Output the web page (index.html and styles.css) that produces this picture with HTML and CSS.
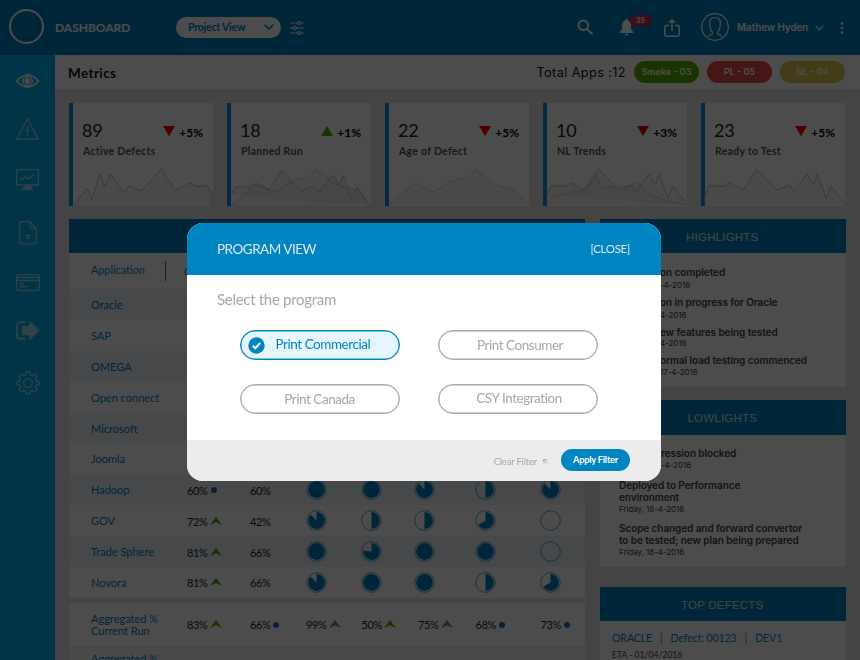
FILE: index.html
```
<!DOCTYPE html>
<html lang="en">
<head>
<meta charset="utf-8">
<title>Dashboard</title>
<link rel="stylesheet" href="styles.css">
</head>
<body>
<svg class="defs" width="0" height="0">
  <defs>
    <symbol id="p100" viewBox="0 0 21 21"><circle class="ring" cx="10.5" cy="10.5" r="9.8"/><circle class="fill" cx="10.5" cy="10.5" r="8.4"/></symbol>
    <symbol id="p88" viewBox="0 0 21 21"><circle class="ring" cx="10.5" cy="10.5" r="9.8"/><path class="fill" d="M10.5 10.5V2.1A8.4 8.4 0 1 1 4.6 4.6Z"/></symbol>
    <symbol id="p75" viewBox="0 0 21 21"><circle class="ring" cx="10.5" cy="10.5" r="9.8"/><path class="fill" d="M10.5 10.5V2.1A8.4 8.4 0 1 1 2.2 9.6Z"/></symbol>
    <symbol id="p66" viewBox="0 0 21 21"><circle class="ring" cx="10.5" cy="10.5" r="9.8"/><path class="fill" d="M10.5 10.5V2.1A8.4 8.4 0 1 1 3.2 14.7Z"/></symbol>
    <symbol id="p50" viewBox="0 0 21 21"><circle class="ring" cx="10.5" cy="10.5" r="9.8"/><path class="fill" d="M10.5 2.1A8.4 8.4 0 0 1 10.5 18.9Z"/></symbol>
    <symbol id="p0" viewBox="0 0 21 21"><circle class="ring" cx="10.5" cy="10.5" r="9.8"/></symbol>
    <symbol id="up" viewBox="0 0 12 8"><path d="M6 0L12 8L6 5.200L0 8Z" fill="#4fae00"/></symbol>
  </defs>
</svg>

<header class="topbar">
  <span class="logo"></span>
  <span class="brand">DASHBOARD</span>
  <span class="view">Project View
    <svg width="10" height="6" viewBox="0 0 10 6"><path d="M.7.7L5 5L9.3.7"/></svg>
  </span>
  <svg class="sliders" width="14" height="14" viewBox="0 0 14 14"><path d="M0 2H14M0 7H14M0 12H14"/><circle cx="9" cy="2" r="1.5"/><circle cx="5" cy="7" r="1.5"/><circle cx="9" cy="12" r="1.5"/></svg>
  <svg class="search" width="17" height="17" viewBox="0 0 17 17"><circle cx="6.3" cy="6.3" r="4.8"/><path d="M10 10L15.5 15.3"/></svg>
  <span class="bellwrap">
    <svg width="15" height="17" viewBox="0 0 15 17"><path d="M7.5 0C8.5 0 9 .7 9 1.6C11 2.3 12 4 12 6.4V10L14.6 13.4V14H.4V13.4L3 10V6.4C3 4 4 2.3 6 1.6C6 .7 6.5 0 7.5 0ZM5.8 14.8H9.2A1.7 1.7 0 0 1 5.8 14.8Z"/></svg>
    <span class="badge">35</span>
  </span>
  <svg class="share" width="16" height="18" viewBox="0 0 16 18"><path d="M5 6.5H2.5A1.7 1.7 0 0 0 .8 8.2V15.5A1.7 1.7 0 0 0 2.5 17.2H13.5A1.7 1.7 0 0 0 15.2 15.5V8.2A1.7 1.7 0 0 0 13.5 6.5H11M8 12V1M5 3.8L8 1L11 3.8"/></svg>
  <svg class="avatar" width="28" height="28" viewBox="0 0 28 28"><circle cx="14" cy="14" r="13.3"/><path d="M7 24C7.500 21.500 11.500 22.500 11.500 20C11.500 18 8.500 17 9 13C7.500 6.500 10 4.500 14 4.500S20.500 6.500 19 13C19.500 17 16.500 18 16.500 20C16.500 22.500 20.500 21.500 21 24"/></svg>
  <span class="user">Mathew Hyden</span>
  <svg class="chev" width="9" height="6" viewBox="0 0 9 6"><path d="M.6.7L4.500 4.900L8.400.7"/></svg>
  <svg class="dots" width="4" height="12" viewBox="0 0 4 12"><circle cx="2" cy="1.500" r="1.300"/><circle cx="2" cy="6" r="1.300"/><circle cx="2" cy="10.500" r="1.300"/></svg>
</header>

<div class="body">
  <nav class="side">
    <svg class="on" width="23" height="14" viewBox="0 0 23 14"><path d="M.7 7Q11.500-5.500 22.300 7Q11.500 19.500 .7 7Z"/><circle cx="11.500" cy="7" r="4.700"/><circle cx="11.500" cy="7" r="2.200" fill="#fff"/></svg>
    <svg width="23" height="22" viewBox="0 0 23 22"><path d="M11.500 1L22.300 21H.7Z"/><path d="M11.500 8.500V14.500M11.500 16.300V18.300" stroke-width="1.900"/></svg>
    <svg width="23" height="21" viewBox="0 0 23 21"><path d="M.6.6H22.400V16H.6ZM4.500 11.500L9.500 7.500L12.500 10L18.500 5.500"/><path class="solid" d="M9 17.500L7 20H16L14 17.500Z"/></svg>
    <svg width="18" height="24" viewBox="0 0 18 24"><path d="M11 .7H3.500A2.800 2.800 0 0 0 .7 3.500V20A2.800 2.800 0 0 0 3.500 22.800H14.500A2.800 2.800 0 0 0 17.300 20V7.500ZM11 .7V5A2.500 2.500 0 0 0 13.500 7.500H17.300M6.800 13.500L11.200 18M11.200 13.500L6.800 18"/></svg>
    <svg width="24" height="17" viewBox="0 0 24 17"><rect x=".6" y=".6" width="22.800" height="15.800" rx="1.500"/><path d="M1 3.500H23M1 6.500H23M3.500 10H8M3.500 12.700H12"/></svg>
    <svg width="23" height="19" viewBox="0 0 23 19"><path d="M9.500 1.200H4A2.800 2.800 0 0 0 1.200 4V15A2.800 2.800 0 0 0 4 17.800H9.500" stroke-width="2"/><path class="solid" d="M6.500 5.500H14V1L22.500 9.500L14 18V13.500H6.500Z"/></svg>
    <svg width="24" height="24" viewBox="0 0 24 24"><circle cx="12" cy="12" r="4.300"/><path d="M9.800 3.600Q9.800 .8 12 .8T14.200 3.600Q15 4.600 16.400 4.500Q18.800 2.400 20.100 3.900T19.500 7.600Q19.300 9 20.400 9.800Q23.200 9.800 23.200 12T20.400 14.200Q19.300 15 19.500 16.400Q21.600 18.800 20.100 20.100T16.400 19.500Q15 19.300 14.200 20.400Q14.200 23.200 12 23.200T9.800 20.400Q9 19.300 7.600 19.500Q5.200 21.600 3.900 20.100T4.500 16.400Q4.700 15 3.600 14.200Q.8 14.200 .8 12T3.600 9.800Q4.700 9 4.500 7.600Q2.400 5.200 3.900 3.900T7.600 4.500Q9 4.700 9.800 3.600Z"/></svg>
  </nav>

  <main>
    <div class="titlebar">
      <h1>Metrics</h1>
      <span class="total">Total Apps :12</span>
      <span class="tag green">Smoke - 03</span>
      <span class="tag red">PL - 05</span>
      <span class="tag yellow">NL - 04</span>
    </div>

    <section class="cards">
      <div class="card"><div class="figures"><b>89</b><i class="down"></i><em>+5%</em></div><p>Active Defects</p>
        <svg width="140" height="38" viewBox="0 0 141 38"><path class="dark" d="M1 38L14 20L19 32L27 6L32 18L38 6L51 25L56 18L69 23L89 1L103 22L118 15L123 18H136L140 26V38"/></svg></div>
      <div class="card"><div class="figures"><b>18</b><i class="up"></i><em>+1%</em></div><p>Planned Run</p>
        <svg width="140" height="38" viewBox="0 0 141 38"><path class="pale" d="M0 38L26 15L45 24L61 13L80 9L86 1L105 16L127 22L140 37"/><path class="dark" d="M0 27L4 19H17L24 16L38 22L51 2L70 23L84 18L89 24L103 7L109 18L113 7L121 31L127 19L140 38"/></svg></div>
      <div class="card"><div class="figures"><b>22</b><i class="down"></i><em>+5%</em></div><p>Age of Defect</p>
        <svg width="140" height="38" viewBox="0 0 141 38"><path class="pale" d="M0 37L26 15L45 24L62 13L82 9L87 1L105 16L125 22L141 37"/></svg></div>
      <div class="card"><div class="figures"><b>10</b><i class="down"></i><em>+3%</em></div><p>NL Trends</p>
        <svg width="140" height="38" viewBox="0 0 141 38"><path class="pale" d="M0 37L4 29L20 25L38 22L50 8L55 20L83 18L91 14L104 27L121 33L140 37"/><path class="dark" d="M0 27L4 18H19L24 15L38 22L52 1L72 22L85 17L89 23L103 6L109 17L113 6L122 30L127 18L141 37"/></svg></div>
      <div class="card"><div class="figures"><b>23</b><i class="down"></i><em>+5%</em></div><p>Ready to Test</p>
        <svg width="140" height="38" viewBox="0 0 141 38"><path class="dark" d="M0 37V27L4 18H20L24 15L39 22L52 1L72 22L85 17L90 23L103 6L109 17L113 6L122 30L127 18L141 37"/></svg></div>
    </section>

    <div class="columns">
      <section class="table">
        <div class="bar"></div>
        <div class="row head"><span class="name">Application</span><span class="col">C</span></div>
        <div class="row"><span class="name">Oracle</span></div>
        <div class="row"><span class="name">SAP</span></div>
        <div class="row"><span class="name">OMEGA</span></div>
        <div class="row"><span class="name">Open connect</span></div>
        <div class="row"><span class="name">Microsoft</span></div>
        <div class="row"><span class="name">Joomla</span></div>
        <div class="row"><span class="name">Hadoop</span><span>60%<i class="dot"></i></span><span>60%</span><svg><use href="#p100"/></svg><svg><use href="#p100"/></svg><svg><use href="#p88"/></svg><svg><use href="#p50"/></svg><svg><use href="#p88"/></svg></div>
        <div class="row"><span class="name">GOV</span><span>72%<svg class="arrow"><use href="#up"/></svg></span><span>42%</span><svg><use href="#p88"/></svg><svg><use href="#p50"/></svg><svg><use href="#p50"/></svg><svg><use href="#p66"/></svg><svg><use href="#p0"/></svg></div>
        <div class="row"><span class="name">Trade Sphere</span><span>81%<svg class="arrow"><use href="#up"/></svg></span><span>66%</span><svg><use href="#p100"/></svg><svg><use href="#p75"/></svg><svg><use href="#p100"/></svg><svg><use href="#p100"/></svg><svg><use href="#p0"/></svg></div>
        <div class="row"><span class="name">Novora</span><span>81%<svg class="arrow"><use href="#up"/></svg></span><span>66%</span><svg><use href="#p88"/></svg><svg><use href="#p100"/></svg><svg><use href="#p100"/></svg><svg><use href="#p50"/></svg><svg><use href="#p66"/></svg></div>
        <div class="row agg"><span class="name">Aggregated %<br>Current Run</span><span>83%<svg class="arrow"><use href="#up"/></svg></span><span>66%<i class="dot"></i></span><span>99%<svg class="arrow"><use href="#up"/></svg></span><span>50%<svg class="arrow"><use href="#up"/></svg></span><span>75%<svg class="arrow"><use href="#up"/></svg></span><span>68%<i class="dot"></i></span><span>73%<i class="dot"></i></span></div>
        <div class="row agg next"><span class="name">Aggregated %</span></div>
      </section>

      <aside>
        <section class="panel high">
          <h2>HIGHLIGHTS</h2>
          <div class="item"><b>on completed</b><small>-4-2016</small></div>
          <div class="item"><b>on in progress for Oracle</b><small>4-2016</small></div>
          <div class="item"><b>ew features being tested</b><small>4-2016</small></div>
          <div class="item"><b>ormal load testing commenced</b><small>17-4-2016</small></div>
        </section>
        <section class="panel low">
          <h2>LOWLIGHTS</h2>
          <div class="item cut"><b>ression blocked</b><small>-4-2016</small></div>
          <div class="item"><b>Deployed to Performance<br>environment</b><small>Friday, 18-4-2016</small></div>
          <div class="item"><b>Scope changed and forward convertor<br>to be tested; new plan being prepared</b><small>Friday, 18-4-2016</small></div>
        </section>
        <section class="panel top">
          <h2>TOP DEFECTS</h2>
          <div class="defect"><span>ORACLE</span><span>|</span><span>Defect: 00123</span><span>|</span><span>DEV1</span></div>
          <div class="eta">ETA - 01/04/2016</div>
        </section>
      </aside>
    </div>
  </main>
</div>

<div class="overlay">
  <div class="modal">
    <div class="mhead"><span class="mtitle">PROGRAM VIEW</span><span class="close">[CLOSE]</span></div>
    <div class="mbody">
      <p>Select the program</p>
      <div class="choices">
        <span class="choice active"><svg width="17" height="17" viewBox="0 0 17 17"><circle cx="8.500" cy="8.500" r="8.200"/><path d="M4.800 8.700L7.400 11.200L12.200 5.800"/></svg><span>Print Commercial</span></span>
        <span class="choice">Print Consumer</span>
        <span class="choice third">Print Canada</span>
        <span class="choice fourth">CSY Integration</span>
      </div>
    </div>
    <div class="mfoot"><span class="clear">Clear Filter</span><svg width="5" height="5" viewBox="0 0 5 5"><path d="M.5 3V.5H3M.5.5L4.500 4.500M4.500.5L3 2M.5 4.500L2 3"/></svg><span class="apply">Apply Filter</span></div>
  </div>
</div>
</body>
</html>
```
FILE: styles.css
```
* { box-sizing: border-box; }
body { margin: 0; width: 860px; height: 660px; overflow: hidden; background: #e3e3e3; font-family: Lato, "Liberation Sans", sans-serif; color: #222; }
svg { display: block; flex: none; fill: none; overflow: visible; }
.defs { position: absolute; }
h1, h2, p { margin: 0; font-weight: 400; }
i, em { font-style: normal; }

.topbar { height: 55px; background: #0380c0; display: flex; align-items: center; padding-left: 9px; white-space: nowrap; color: #fff; }
.topbar svg { stroke: #fff; stroke-width: 1.2; }
.logo { width: 35px; height: 35px; border: 2px solid #fff; border-radius: 50%; margin-top: -2px; }
.brand { width: 121px; margin-left: 11px; font-size: 12px; font-weight: 700; letter-spacing: -.02px; }
.view { width: 105px; height: 21px; border-radius: 11px; background: #fff; color: #0380c0; font-size: 10.500px; font-weight: 700; letter-spacing: -.2px; display: flex; align-items: center; justify-content: space-between; padding: 0 7px 1px 12px; }
.topbar .view svg { stroke: #0380c0; stroke-width: 1.5; }
.sliders { margin-left: 9px; margin-top: 1px; }
.sliders circle { fill: #0380c0; }
.search { margin-left: 273px; }
.topbar .search { stroke-width: 2; }
.bellwrap { position: relative; margin-left: 25px; }
.topbar .bellwrap svg { fill: #fff; stroke: none; }
.badge { position: absolute; left: 11px; top: -4px; width: 21px; height: 11px; border-radius: 6px; background: #d8265b; font: 600 7.500px/11px Inter, sans-serif; text-align: center; }
.share { margin-left: 30px; }
.topbar .share { stroke-width: 1.500; }
.avatar { margin-left: 21px; margin-top: -1px; }
.user { width: 72px; margin-left: 8px; font: 600 9.800px/12px Inter, sans-serif; }
.chev { margin-left: 6px; }
.dots { margin-left: 16px; }
.topbar .dots { fill: #fff; stroke: none; }

.body { display: flex; height: 605px; }
.side { width: 55px; background: #00b0ea; display: flex; flex-direction: column; align-items: center; padding-top: 19px; }
.side svg { stroke: #9edbf3; stroke-width: 1.300; }
.side .solid { fill: #9edbf3; }
.side .on { stroke: #fff; stroke-width: 1.500; }
.side svg:nth-child(2) { margin-top: 30px; }
.side svg:nth-child(3) { margin-top: 29px; }
.side svg:nth-child(4) { margin-top: 31px; }
.side svg:nth-child(5) { margin-top: 29px; }
.side svg:nth-child(6) { margin-top: 30px; }
.side svg:nth-child(7) { margin-top: 31px; }
main { width: 805px; }

.titlebar { height: 34px; background: #fff; display: flex; align-items: center; padding: 0 15px 0 13px; color: #111; }
h1 { font-size: 13.500px; font-weight: 700; letter-spacing: .4px; flex: 1; padding-top: 1px; }
.total { font: 400 12.700px/16px Inter, sans-serif; letter-spacing: .4px; margin-right: 8px; padding-top: 1px; white-space: nowrap; }
.tag { width: 65px; height: 22px; border-radius: 11px; margin-left: 8px; color: #fff; font: 600 9px/22px Inter, sans-serif; text-align: center; }
.total + .tag { margin-left: 0; }
.green { background: #59ad00; }
.red { background: #e54c48; }
.yellow { background: #ddc94d; }

.cards { display: flex; gap: 14px; padding: 14px 0 0 14px; }
.card { width: 144px; height: 103px; flex: none; background: #fff; border-left: 4px solid #0b8cd0; }
.figures { display: flex; height: 35px; padding: 18px 10px 0 9px; align-items: center; }
.figures b { flex: 1; font-weight: 400; font-size: 18px; line-height: 20px; letter-spacing: -.2px; color: #222; }
.figures em { font-size: 12px; font-weight: 700; color: #000; margin-left: 4px; margin-top: 5px; }
.figures i { border: 6px solid transparent; margin-top: 3px; }
.figures .down { border-top: 10px solid #f00000; border-bottom: 0; }
.figures .up { border-bottom: 10px solid #4fae00; border-top: 0; }
.card p { font-size: 10.500px; line-height: 14px; font-weight: 700; color: #555; margin: 6px 0 10px 10px; letter-spacing: .28px; white-space: nowrap; }
.card path { stroke: #c2c2c2; fill: rgba(150,150,150,.1); stroke-width: 1; }
.card .pale { stroke: #d4d4d4; }

.columns { display: flex; padding: 13px 0 0 14px; gap: 15px; }
.table { width: 516px; }
.bar { height: 34px; background: #0380c0; }
.row { height: 30.900px; background: #fff; display: grid; grid-template-columns: 96px 63px 56px 55.500px 56.500px 57.500px 65px 45px; padding-left: 22px; align-items: center; font-size: 11px; color: #222; }
.row:nth-child(odd) { background: #e9f2f8; }
.row.head { height: 36px; background: #fff; }
.name { color: #0380c0; white-space: nowrap; line-height: 12px; padding-top: 2px; }
.head .name { border-right: 1px solid #0380c0; width: 75px; height: 20px; padding-top: 3px; font-size: 10.800px; }
.head .col { color: #0380c0; margin-left: -3px; }
.row > span { display: flex; align-items: center; letter-spacing: -.4px; padding-top: 1px; }
.row > span.name { display: block; letter-spacing: 0; }
.row > svg { width: 21px; height: 21px; margin-left: -.500px; }
.row > svg:nth-of-type(3) { margin-left: -4.500px; }
.arrow { width: 12px; height: 8px; margin-left: 2.500px; margin-top: -1px; }
.dot { width: 6px; height: 6px; border-radius: 50%; background: #1f6ad0; margin-left: 4px; margin-top: 0; }
.agg .dot { margin-left: 3px; }
.ring { stroke: #5aa5cc; fill: none; stroke-width: 1; }
.fill { fill: #0380c0; }
.row.agg { height: 43px; margin-top: 5px; background: #fff; }
.row.next { margin-top: 1px; background: #f3f3f3; align-items: start; padding-top: 5px; }

aside { width: 245.500px; }
.panel { background: #fff; }
h2 { height: 34px; background: #0380c0; color: #dce6ec; text-align: center; font: 400 11.500px/36px "Liberation Sans", sans-serif; letter-spacing: .2px; padding-right: 1px; }
.item b { display: block; font: 600 10px/12px Inter, sans-serif; letter-spacing: -.08px; white-space: nowrap; color: #444; }
.item small { display: block; font: 400 8.100px/11px Inter, sans-serif; letter-spacing: -.1px; color: #444; }
.high { height: 168px; }
.high .item { padding-left: 60px; height: 30px; }
.high h2 { margin-bottom: 13px; }
.high small { margin-top: 2px; }
.high .item:nth-last-child(-n+2) small { margin-top: 0; }
.high .item:nth-last-child(2) { height: 28px; }
.high .item:nth-last-child(1) small { margin-top: 1px; }
.low { height: 167px; margin-top: 13px; }
.low .item { padding-left: 19px; margin-bottom: 8px; }
.low .item small { padding-top: 1px; }
.low .item:nth-child(n+3) { margin-bottom: 7px; }
.low .cut { padding-left: 61px; }
.low h2 { height: 35px; margin-bottom: 12px; }
.top { height: 100px; margin-top: 20px; }
.defect { display: flex; gap: 8px; padding: 11px 0 0 12px; font-size: 10.600px; letter-spacing: -.12px; line-height: 13px; color: #0380c0; white-space: nowrap; }
.eta { padding: 5px 0 0 12px; font-size: 8.600px; line-height: 11px; color: #444; }

.overlay { position: fixed; inset: 0; background: rgba(0,0,0,.7); }
.modal { position: absolute; left: 187px; top: 223px; width: 474px; height: 258px; border-radius: 16px; overflow: hidden; background: #fff; }
.mhead { height: 52px; background: #0085c3; color: #dfe6ea; display: flex; justify-content: space-between; align-items: center; padding: 0 31px 1px 30px; }
.mtitle { font-size: 13.500px; letter-spacing: -.5px; }
.close { font-size: 11.500px; letter-spacing: -.35px; }
.mbody { height: 165px; padding: 14px 0 0 30px; color: #a8a8a8; }
.mbody p { font-size: 15px; line-height: 20px; letter-spacing: -.3px; }
.choices { display: grid; grid-template-columns: 160px 160px; column-gap: 38px; row-gap: 24px; padding: 21px 0 0 22.500px; }
.choice { height: 30px; border: 1px solid #a8a8a8; box-shadow: inset 0 0 0 .5px #a8a8a8; border-radius: 15px; font-size: 13.500px; line-height: 29px; letter-spacing: -.45px; text-align: center; padding-left: 5px; }
.third { padding-left: 0; }
.fourth { padding-left: 3px; line-height: 27px; }
.active { display: flex; align-items: center; background: #e5f6fe; border-color: #0085c3; box-shadow: inset 0 0 0 .5px #0085c3; color: #0085c3; padding-left: 7px; }
.active svg { fill: #0085c3; }
.active path { stroke: #fff; stroke-width: 2; fill: none; }
.active span { margin-left: 11px; margin-top: -2px; }
.mfoot { height: 41px; background: #edebec; display: flex; align-items: center; justify-content: flex-end; padding: 0 31px 1px 0; }
.clear { font-size: 9.500px; letter-spacing: -.2px; color: #a8a8a8; margin-top: 3px; }
.mfoot svg { stroke: #a8a8a8; stroke-width: .9; margin: 3px 13px 0 6px; }
.apply { width: 69px; height: 22px; border-radius: 11px; background: #0085c3; color: #fff; font-size: 9.300px; font-weight: 700; letter-spacing: -.25px; line-height: 21px; text-align: center; }
```
